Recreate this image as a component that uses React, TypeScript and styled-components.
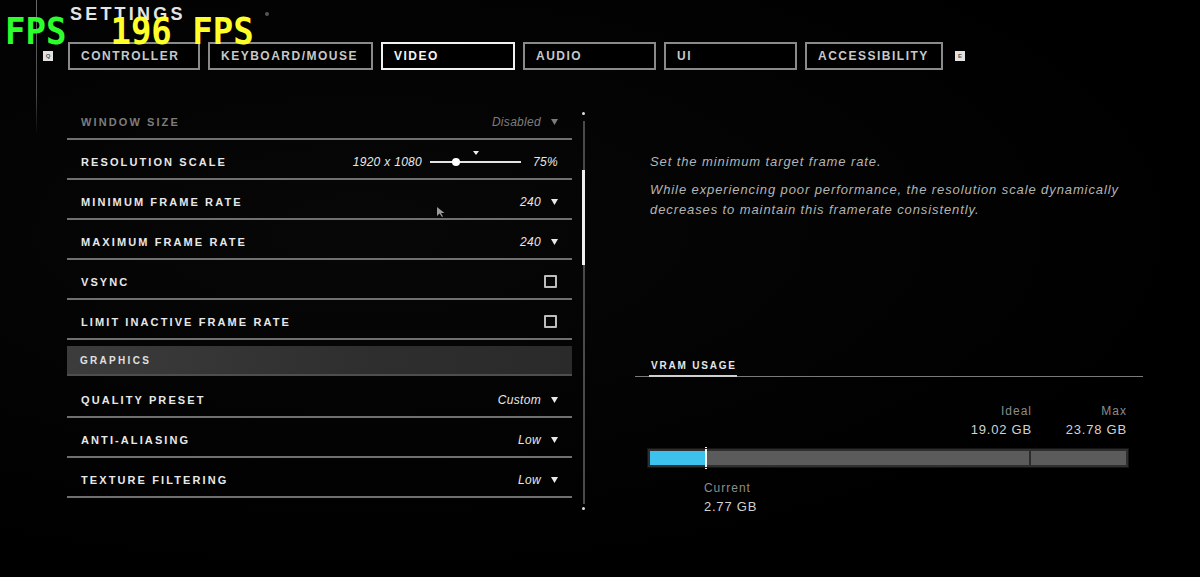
import styled, { createGlobalStyle } from "styled-components";

const GlobalStyle = createGlobalStyle`
  html, body {
    margin: 0;
    padding: 0;
    background: #000;
  }
  body {
    font-family: "Liberation Sans", Arial, sans-serif;
    color: #ddd;
  }
`;

const Page = styled.div`
  position: relative;
  width: 1200px;
  height: 577px;
  overflow: hidden;
  background: radial-gradient(ellipse at 30% 40%, #070707 0%, #000 70%);
  display: flex;
  padding-left: 36px;
  box-sizing: border-box;
`;

const Rail = styled.div`
  width: 1px;
  height: 135px;
  background: linear-gradient(to bottom, #6a6a6a 0%, #4a4a4a 70%, transparent 100%);
`;

const Content = styled.div`
  display: flex;
  flex-direction: column;
  margin-left: 6px;
`;

const TitleRow = styled.div`
  display: flex;
  align-items: center;
  margin-top: 3px;
  padding-left: 27px;
  height: 22px;
`;

const Title = styled.h1`
  margin: 0;
  font-size: 18px;
  font-weight: 700;
  letter-spacing: 3.2px;
  color: #e4e4e4;
`;

const TitleDot = styled.span`
  width: 4px;
  height: 4px;
  border-radius: 50%;
  background: #555;
  margin-left: 79px;
`;

const TabBar = styled.nav`
  display: flex;
  align-items: center;
  margin-top: 17px;
`;

const KeyBadge = styled.span<{ $side: "left" | "right" }>`
  width: 10px;
  height: 10px;
  background: #e2e2e2;
  color: #555;
  font-size: 6px;
  font-weight: 700;
  line-height: 10px;
  display: flex;
  align-items: center;
  justify-content: center;
  margin: ${(p) => (p.$side === "left" ? "0 15px 0 0" : "0 0 0 12px")};
`;

const Tabs = styled.div`
  display: flex;
  gap: 8px;
`;

const Tab = styled.button<{ $width: number; $active?: boolean }>`
  width: ${(p) => p.$width}px;
  height: 28px;
  box-sizing: border-box;
  background: #000;
  border: 2px solid ${(p) => (p.$active ? "#f2f2f2" : "#8a8a8a")};
  color: ${(p) => (p.$active ? "#f4f4f4" : "#c8c8c8")};
  font-family: "Liberation Sans", Arial, sans-serif;
  font-size: 12px;
  font-weight: 700;
  letter-spacing: 1.5px;
  text-align: left;
  padding: 0 0 0 11px;
  cursor: pointer;
`;

const Main = styled.div`
  display: flex;
  margin-top: 30px;
  margin-left: 24px;
`;

const List = styled.div`
  width: 505px;
  display: flex;
  flex-direction: column;
`;

const Row = styled.div<{ $dim?: boolean }>`
  height: 33px;
  border-bottom: 2px solid #707070;
  display: flex;
  align-items: center;
  justify-content: space-between;
  padding: 5px 14px 0;
  color: ${(p) => (p.$dim ? "#7c7c7c" : "#e8e8e8")};
`;

const Label = styled.span`
  font-size: 11px;
  font-weight: 700;
  letter-spacing: 2.1px;
`;

const ValueGroup = styled.div`
  display: flex;
  align-items: center;
  gap: 10px;
`;

const Value = styled.span`
  font-size: 12px;
  font-style: italic;
  letter-spacing: 0.3px;
`;

const Checkbox = styled.span`
  width: 9px;
  height: 9px;
  border: 2px solid #bdbdbd;
  border-radius: 1px;
  margin-right: 1px;
`;

const SectionHeader = styled.div`
  margin-top: 6px;
  height: 28px;
  display: flex;
  align-items: center;
  padding-left: 13px;
  background: linear-gradient(to right, #3c3c3c, #2e2e2e 60%, #2a2a2a);
  border-bottom: 2px solid #4e4e4e;
  margin-bottom: 2px;
  font-size: 10px;
  font-weight: 700;
  letter-spacing: 2.3px;
  color: #e0e0e0;
`;

const Slider = styled.div`
  display: flex;
  align-items: center;
`;

const SliderTrack = styled.div`
  position: relative;
  width: 91px;
  height: 2px;
  background: #e4e4e4;
  margin: 0 12px 0 8px;
`;

const Knob = styled.span`
  position: absolute;
  top: -3px;
  width: 8px;
  height: 8px;
  margin-left: -4px;
  border-radius: 50%;
  background: #fff;
`;

const Marker = styled.span`
  position: absolute;
  top: -10px;
  margin-left: -3px;
  width: 0;
  height: 0;
  border-left: 3px solid transparent;
  border-right: 3px solid transparent;
  border-top: 4px solid #eee;
`;

const ScrollColumn = styled.div`
  margin: 12px 0 0 9px;
  height: 398px;
  width: 5px;
  display: flex;
  flex-direction: column;
  align-items: center;
`;

const ScrollDot = styled.span`
  width: 3px;
  height: 3px;
  border-radius: 50%;
  background: #ddd;
  margin: 0 0 6px;
  &:last-child {
    margin: 3px 0 0;
  }
`;

const TrackPart = styled.span<{ $h?: number }>`
  width: 2px;
  background: #4a4a4a;
  ${(p) => (p.$h ? `height: ${p.$h}px;` : "flex: 1;")}
`;

const Thumb = styled.span`
  width: 3px;
  height: 95px;
  background: #f0f0f0;
`;

const Panel = styled.aside`
  width: 508px;
  margin-left: 49px;
  display: flex;
  flex-direction: column;
`;

const Description = styled.div`
  padding: 52px 15px 0;
  color: #b4b4b4;
  font-size: 13px;
  font-style: italic;
  letter-spacing: 0.9px;
  line-height: 20px;
  & p {
    margin: 0 0 8px;
  }
`;

const Vram = styled.section`
  margin-top: 132px;
  display: flex;
  flex-direction: column;
`;

const VramHead = styled.div`
  border-bottom: 1px solid #7a7a7a;
  display: flex;
  padding-left: 14px;
`;

const VramTitle = styled.h2`
  margin: 0 0 -1px;
  padding: 0 0 4px 2px;
  font-size: 10px;
  font-weight: 700;
  letter-spacing: 1.8px;
  color: #e6e6e6;
  border-bottom: 2px solid #cfcfcf;
`;

const Stats = styled.div`
  display: flex;
  justify-content: flex-end;
  padding-right: 16px;
  margin-top: 25px;
`;

const Stat = styled.div<{ $width: number }>`
  width: ${(p) => p.$width}px;
  display: flex;
  flex-direction: column;
  align-items: flex-end;
`;

const StatLabel = styled.span`
  font-size: 12px;
  letter-spacing: 1px;
  color: #8c8c8c;
  line-height: 18px;
`;

const StatValue = styled.span`
  font-size: 13px;
  letter-spacing: 0.8px;
  color: #d2d2d2;
  line-height: 20px;
`;

const Bar = styled.div`
  margin: 9px 0 0 13px;
  width: 480px;
  height: 18px;
  box-sizing: border-box;
  border: 2px solid #2f2f2f;
  background: #5b5b5b;
  display: flex;
  outline: 1px solid #151515;
`;

const BarFill = styled.span`
  background: #3dc2ee;
`;

const BarCurrent = styled.span`
  width: 2px;
  margin: -4px 0;
  background: #f4f4f4;
`;

const BarRest = styled.span`
  flex: 1;
`;

const BarIdeal = styled.span`
  width: 2px;
  background: #2c2c2c;
`;

const CurrentStat = styled.div`
  display: flex;
  flex-direction: column;
  margin-top: 12px;
`;

const FpsOverlay = styled.div`
  position: absolute;
  left: 5px;
  top: 12px;
  display: flex;
  gap: 44px;
  font-family: "DejaVu Sans Mono", "Liberation Mono", monospace;
  font-weight: 700;
  font-size: 34px;
  line-height: 34px;
  transform: scaleY(1.1);
  transform-origin: top left;
  pointer-events: none;
`;

const Fps = styled.span<{ $color: string }>`
  color: ${(p) => p.$color};
`;

const Cursor = styled.svg`
  position: absolute;
  left: 436px;
  top: 206px;
`;

const Caret = () => (
  <svg width="7" height="6" viewBox="0 0 7 6">
    <path d="M0 0 L7 0 L3.5 6 Z" fill="currentColor" />
  </svg>
);

type Setting =
  | { kind: "select"; label: string; value: string; dim?: boolean }
  | { kind: "check"; label: string }
  | { kind: "slider"; label: string; res: string; pct: number; marker: number };

const display: Setting[] = [
  { kind: "select", label: "WINDOW SIZE", value: "Disabled", dim: true },
  { kind: "slider", label: "RESOLUTION SCALE", res: "1920 x 1080", pct: 75, marker: 50 },
  { kind: "select", label: "MINIMUM FRAME RATE", value: "240" },
  { kind: "select", label: "MAXIMUM FRAME RATE", value: "240" },
  { kind: "check", label: "VSYNC" },
  { kind: "check", label: "LIMIT INACTIVE FRAME RATE" },
];

const graphics: Setting[] = [
  { kind: "select", label: "QUALITY PRESET", value: "Custom" },
  { kind: "select", label: "ANTI-ALIASING", value: "Low" },
  { kind: "select", label: "TEXTURE FILTERING", value: "Low" },
];

const tabs = [
  { name: "CONTROLLER", width: 132 },
  { name: "KEYBOARD/MOUSE", width: 165 },
  { name: "VIDEO", width: 134, active: true },
  { name: "AUDIO", width: 133 },
  { name: "UI", width: 133 },
  { name: "ACCESSIBILITY", width: 138 },
];

const SettingRow = ({ s }: { s: Setting }) => (
  <Row $dim={s.kind === "select" && s.dim}>
    <Label>{s.label}</Label>
    {s.kind === "select" && (
      <ValueGroup>
        <Value>{s.value}</Value>
        <Caret />
      </ValueGroup>
    )}
    {s.kind === "check" && <Checkbox />}
    {s.kind === "slider" && (
      <Slider>
        <Value>{s.res}</Value>
        <SliderTrack>
          <Marker style={{ left: `${s.marker}%` }} />
          <Knob style={{ left: `${((s.pct - 50) / 88) * 100}%` }} />
        </SliderTrack>
        <Value>{s.pct}%</Value>
      </Slider>
    )}
  </Row>
);

const vram = { current: 2.77, ideal: 19.02, max: 23.78 };

export default function App() {
  const fillPct = (vram.current / vram.max) * 100;
  const idealPct = (vram.ideal / vram.max) * 100;

  return (
    <>
      <GlobalStyle />
      <Page>
        <Rail />
        <Content>
          <TitleRow>
            <Title>SETTINGS</Title>
            <TitleDot />
          </TitleRow>
          <TabBar>
            <KeyBadge $side="left">Q</KeyBadge>
            <Tabs>
              {tabs.map((t) => (
                <Tab key={t.name} $width={t.width} $active={t.active}>
                  {t.name}
                </Tab>
              ))}
            </Tabs>
            <KeyBadge $side="right">E</KeyBadge>
          </TabBar>
          <Main>
            <List>
              {display.map((s) => (
                <SettingRow key={s.label} s={s} />
              ))}
              <SectionHeader>GRAPHICS</SectionHeader>
              {graphics.map((s) => (
                <SettingRow key={s.label} s={s} />
              ))}
            </List>
            <ScrollColumn>
              <ScrollDot />
              <TrackPart $h={49} />
              <Thumb />
              <TrackPart />
              <ScrollDot />
            </ScrollColumn>
            <Panel>
              <Description>
                <p>Set the minimum target frame rate.</p>
                <p>
                  While experiencing poor performance, the resolution scale dynamically
                  <br />
                  decreases to maintain this framerate consistently.
                </p>
              </Description>
              <Vram>
                <VramHead>
                  <VramTitle>VRAM USAGE</VramTitle>
                </VramHead>
                <Stats>
                  <Stat $width={120}>
                    <StatLabel>Ideal</StatLabel>
                    <StatValue>{vram.ideal.toFixed(2)} GB</StatValue>
                  </Stat>
                  <Stat $width={95}>
                    <StatLabel>Max</StatLabel>
                    <StatValue>{vram.max.toFixed(2)} GB</StatValue>
                  </Stat>
                </Stats>
                <Bar>
                  <BarFill style={{ width: `${fillPct}%` }} />
                  <BarCurrent />
                  <BarRest style={{ flex: `0 0 calc(${idealPct - fillPct}% - 4px)` }} />
                  <BarIdeal />
                  <BarRest />
                </Bar>
                <CurrentStat style={{ marginLeft: `${13 + (480 * fillPct) / 100}px` }}>
                  <StatLabel>Current</StatLabel>
                  <StatValue>{vram.current.toFixed(2)} GB</StatValue>
                </CurrentStat>
              </Vram>
            </Panel>
          </Main>
        </Content>
        <FpsOverlay>
          <Fps $color="#2cff2c">FPS</Fps>
          <Fps $color="#ffff2a">196 FPS</Fps>
        </FpsOverlay>
        <Cursor width="10" height="12" viewBox="0 0 10 12">
          <path d="M1 1 L1 10 L3.5 7.5 L6 11 L7 10.5 L5 7 L8.5 7 Z" fill="#9a9a9a" />
        </Cursor>
      </Page>
    </>
  );
}
